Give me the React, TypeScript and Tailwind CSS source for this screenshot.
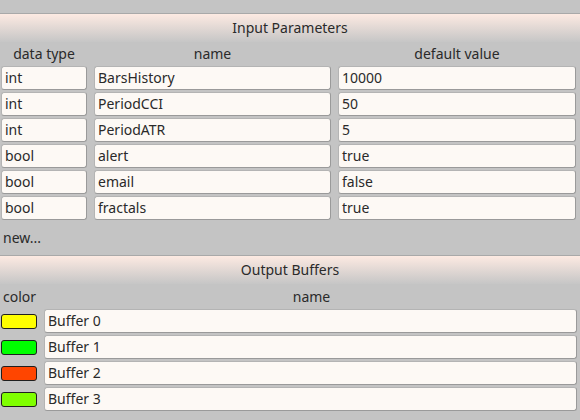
import React from 'react'

const params = [
  { type: 'int', name: 'BarsHistory', value: '10000' },
  { type: 'int', name: 'PeriodCCI', value: '50' },
  { type: 'int', name: 'PeriodATR', value: '5' },
  { type: 'bool', name: 'alert', value: 'true' },
  { type: 'bool', name: 'email', value: 'false' },
  { type: 'bool', name: 'fractals', value: 'true' },
]

const buffers = [
  { color: '#ffff00', name: 'Buffer 0' },
  { color: '#00ff00', name: 'Buffer 1' },
  { color: '#ff4500', name: 'Buffer 2' },
  { color: '#7fff00', name: 'Buffer 3' },
]

function Field({ value }: { value: string }) {
  return (
    <div className="h-[24px] rounded-[3px] border border-[#b4b4b4] border-b-[#9a9a9a] border-r-[#9a9a9a] bg-[#fdf9f5] px-[3px] flex items-center truncate">
      {value}
    </div>
  )
}

function SectionHeader({ title }: { title: string }) {
  return (
    <div className="h-[29px] border-t border-[#a9a9a9] bg-gradient-to-b from-[#fdeae2] to-[#c6c6c6] flex items-center justify-center">
      {title}
    </div>
  )
}

export default function App() {
  return (
    <div
      className="w-[580px] h-[420px] overflow-hidden bg-[#c4c4c4] text-[14px] leading-none text-[#2a2a2a]"
      style={{ fontFamily: '"Noto Sans", "Open Sans", sans-serif' }}
    >
      <div className="h-[13px]" />
      <SectionHeader title="Input Parameters" />

      <div className="px-[1px]">
        <div className="grid grid-cols-[86px_237px_238px] gap-x-[7px] h-[23px] items-center text-center">
          <span>data type</span>
          <span>name</span>
          <span>default value</span>
        </div>
        <div className="grid grid-cols-[86px_237px_238px] gap-x-[7px] gap-y-[2px] pt-[1px]">
          {params.map(p => (
            <React.Fragment key={p.name}>
              <Field value={p.type} />
              <Field value={p.name} />
              <Field value={p.value} />
            </React.Fragment>
          ))}
        </div>
      </div>

      <div className="h-[35px] flex items-center px-[3px] pt-[1px]">new...</div>

      <SectionHeader title="Output Buffers" />

      <div className="px-[1px]">
        <div className="flex h-[25px] items-center">
          <span className="w-[36px] pl-[2px]">color</span>
          <span className="flex-1 text-center pl-[7px]">name</span>
        </div>
        <div className="flex flex-col gap-[2px]">
          {buffers.map(b => (
            <div key={b.name} className="flex items-center gap-[7px]">
              <div
                className="w-[36px] h-[15px] rounded-[3px] border border-[#1f1f1f]"
                style={{ backgroundColor: b.color }}
              />
              <div className="flex-1 pr-[2px]">
                <Field value={b.name} />
              </div>
            </div>
          ))}
        </div>
      </div>
    </div>
  )
}
